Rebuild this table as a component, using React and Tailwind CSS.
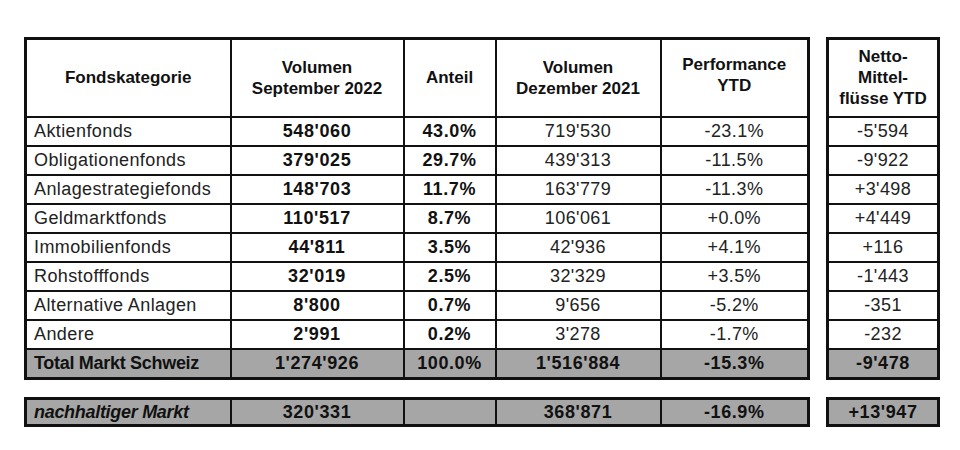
import React from "react";

const rows = [
  ["Aktienfonds", "548'060", "43.0%", "719'530", "-23.1%", "-5'594"],
  ["Obligationenfonds", "379'025", "29.7%", "439'313", "-11.5%", "-9'922"],
  ["Anlagestrategiefonds", "148'703", "11.7%", "163'779", "-11.3%", "+3'498"],
  ["Geldmarktfonds", "110'517", "8.7%", "106'061", "+0.0%", "+4'449"],
  ["Immobilienfonds", "44'811", "3.5%", "42'936", "+4.1%", "+116"],
  ["Rohstofffonds", "32'019", "2.5%", "32'329", "+3.5%", "-1'443"],
  ["Alternative Anlagen", "8'800", "0.7%", "9'656", "-5.2%", "-351"],
  ["Andere", "2'991", "0.2%", "3'278", "-1.7%", "-232"],
];

const td = "border-2 border-[#111] p-0 text-center align-middle";
const bold = "font-bold text-[18px] tracking-[0.6px] text-[#111]";
const reg = "text-[18px] tracking-[0.4px] text-[#222]";
const hd = "font-bold text-[17px] leading-[21px] text-[#111]";

function Cols() {
  return (
    <colgroup>
      <col className="w-[205px]" />
      <col className="w-[173px]" />
      <col className="w-[92px]" />
      <col className="w-[165px]" />
      <col className="w-[148px]" />
    </colgroup>
  );
}

export default function App() {
  return (
    <div
      className="w-[960px] h-[450px] bg-white pl-[24px] pt-[37px]"
      style={{ fontFamily: '"Liberation Sans", Arial, sans-serif' }}
    >
      <div className="flex gap-[16px] items-start">
        <table className="table-fixed w-[783px] border-collapse border-[3px] border-[#111]">
          <Cols />
          <tbody>
            <tr className="h-[78px]">
              <td className={`${td} ${hd}`}>Fondskategorie</td>
              <td className={`${td} ${hd}`}>
                Volumen
                <br />
                September 2022
              </td>
              <td className={`${td} ${hd}`}>Anteil</td>
              <td className={`${td} ${hd}`}>
                Volumen
                <br />
                Dezember 2021
              </td>
              <td className={`${td} ${hd}`}>
                <div className="-mt-[6px]">
                  Performance
                  <br />
                  YTD
                </div>
              </td>
            </tr>
            {rows.map((r) => (
              <tr key={r[0]} className="h-[29px]">
                <td className={`${td} !text-left pl-[7px] ${reg} leading-[20px]`}>{r[0]}</td>
                <td className={`${td} ${bold} leading-[20px]`}>{r[1]}</td>
                <td className={`${td} ${bold} leading-[20px]`}>{r[2]}</td>
                <td className={`${td} ${reg} leading-[20px]`}>{r[3]}</td>
                <td className={`${td} ${reg} leading-[20px]`}>{r[4]}</td>
              </tr>
            ))}
            <tr className="h-[30px] bg-[#a6a6a6]">
              <td className={`${td} !text-left pl-[7px] font-bold text-[18px] tracking-[-0.3px] text-[#111] leading-[20px]`}>
                Total Markt Schweiz
              </td>
              <td className={`${td} ${bold} leading-[20px]`}>1'274'926</td>
              <td className={`${td} ${bold} leading-[20px]`}>100.0%</td>
              <td className={`${td} ${bold} leading-[20px]`}>1'516'884</td>
              <td className={`${td} ${bold} leading-[20px]`}>-15.3%</td>
            </tr>
          </tbody>
        </table>

        <table className="table-fixed w-[114px] border-collapse border-[3px] border-[#111]">
          <tbody>
            <tr className="h-[78px]">
              <td className={`${td} ${hd}`}>
                Netto-
                <br />
                Mittel-
                <br />
                flüsse YTD
              </td>
            </tr>
            {rows.map((r) => (
              <tr key={r[0]} className="h-[29px]">
                <td className={`${td} ${reg} leading-[20px]`}>{r[5]}</td>
              </tr>
            ))}
            <tr className="h-[30px] bg-[#a6a6a6]">
              <td className={`${td} ${bold} leading-[20px]`}>-9'478</td>
            </tr>
          </tbody>
        </table>
      </div>

      <div className="flex gap-[16px] items-start mt-[17px]">
        <table className="table-fixed w-[783px] border-collapse border-[3px] border-[#111] bg-[#a6a6a6]">
          <Cols />
          <tbody>
            <tr className="h-[27px]">
              <td className={`${td} !text-left pl-[7px] font-bold italic text-[18px] tracking-[-0.3px] text-[#111] leading-[20px]`}>
                nachhaltiger Markt
              </td>
              <td className={`${td} ${bold} leading-[20px]`}>320'331</td>
              <td className={`${td}`}></td>
              <td className={`${td} ${bold} leading-[20px]`}>368'871</td>
              <td className={`${td} ${bold} leading-[20px]`}>-16.9%</td>
            </tr>
          </tbody>
        </table>
        <table className="table-fixed w-[114px] border-collapse border-[3px] border-[#111] bg-[#a6a6a6]">
          <tbody>
            <tr className="h-[27px]">
              <td className={`${td} ${bold} leading-[20px]`}>+13'947</td>
            </tr>
          </tbody>
        </table>
      </div>
    </div>
  );
}
